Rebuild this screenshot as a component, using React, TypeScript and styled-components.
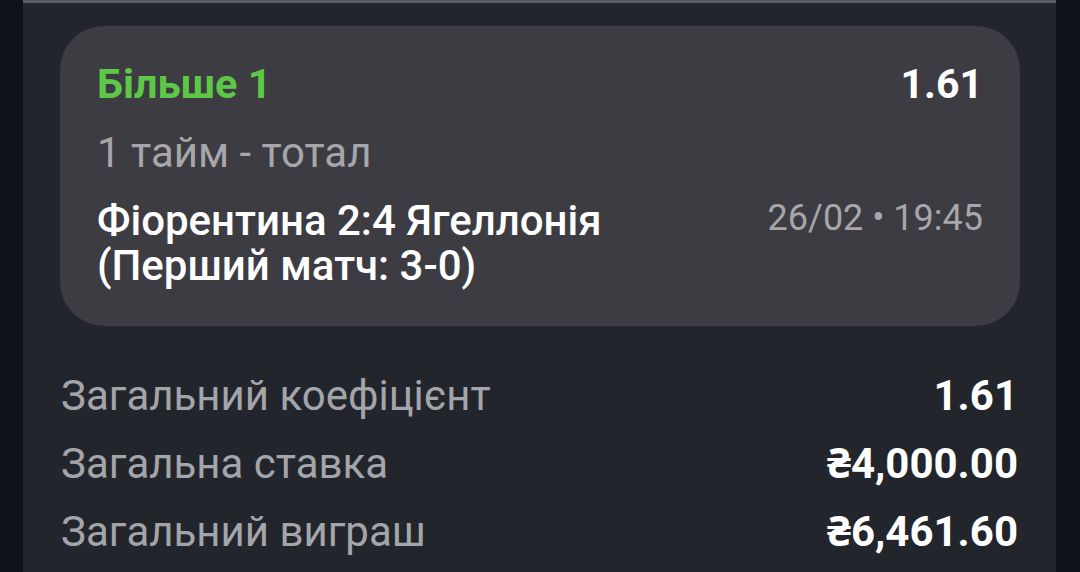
import React from "react";
import styled, { createGlobalStyle } from "styled-components";

const Global = createGlobalStyle`
  html, body { margin: 0; padding: 0; background: #0f121a; }
  body { font-family: Roboto, "Noto Sans", sans-serif; -webkit-font-smoothing: antialiased; }
`;

const Panel = styled.div`
  box-sizing: border-box;
  margin: 0 24px 0 23px;
  height: 572px;
  background: #23252c;
  border-top: 3px solid #5b5c61;
  display: flex;
  flex-direction: column;
  overflow: hidden;
`;

const Card = styled.div`
  margin: 23px 36px 0 37px;
  background: #3d3c42;
  border-radius: 44px;
  padding: 33px 37px 38px 37px;
  display: flex;
  flex-direction: column;
`;

const TopRow = styled.div`
  display: flex;
  justify-content: space-between;
  align-items: baseline;
  line-height: 50px;
`;

const Pick = styled.span`
  font-size: 41.5px;
  font-weight: 700;
  color: #5cc845;
`;

const Odds = styled.span`
  font-size: 41px;
  font-weight: 700;
  color: #ffffff;
`;

const Market = styled.div`
  margin-top: 19px;
  font-size: 42px;
  line-height: 50px;
  color: #a6a6ab;
`;

const EventRow = styled.div`
  margin-top: 20px;
  display: flex;
  justify-content: space-between;
  align-items: flex-start;
  gap: 24px;
`;

const Teams = styled.div`
  font-size: 42px;
  font-weight: 500;
  line-height: 45px;
  color: #ffffff;
`;

const DateTime = styled.div`
  font-size: 36px;
  line-height: 41px;
  color: #a6a6ab;
  white-space: nowrap;
`;

const Summary = styled.div`
  margin: 36px 38px 0 38px;
  display: flex;
  flex-direction: column;
`;

const SumRow = styled.div`
  display: flex;
  justify-content: space-between;
  align-items: baseline;
  line-height: 68px;
`;

const Label = styled.span`
  font-size: 42px;
  color: #a4a5aa;
`;

const Value = styled.span`
  font-size: 42px;
  font-weight: 700;
  color: #ffffff;
`;

const rows = [
  { label: "Загальний коефіцієнт", value: "1.61" },
  { label: "Загальна ставка", value: "₴4,000.00" },
  { label: "Загальний виграш", value: "₴6,461.60" },
];

export default function App() {
  return (
    <>
      <Global />
      <Panel>
        <Card>
          <TopRow>
            <Pick>Більше 1</Pick>
            <Odds>1.61</Odds>
          </TopRow>
          <Market>1 тайм - тотал</Market>
          <EventRow>
            <Teams>
              Фіорентина 2:4 Ягеллонія
              <br />
              (Перший матч: 3-0)
            </Teams>
            <DateTime>26/02 • 19:45</DateTime>
          </EventRow>
        </Card>
        <Summary>
          {rows.map((r) => (
            <SumRow key={r.label}>
              <Label>{r.label}</Label>
              <Value>{r.value}</Value>
            </SumRow>
          ))}
        </Summary>
      </Panel>
    </>
  );
}
